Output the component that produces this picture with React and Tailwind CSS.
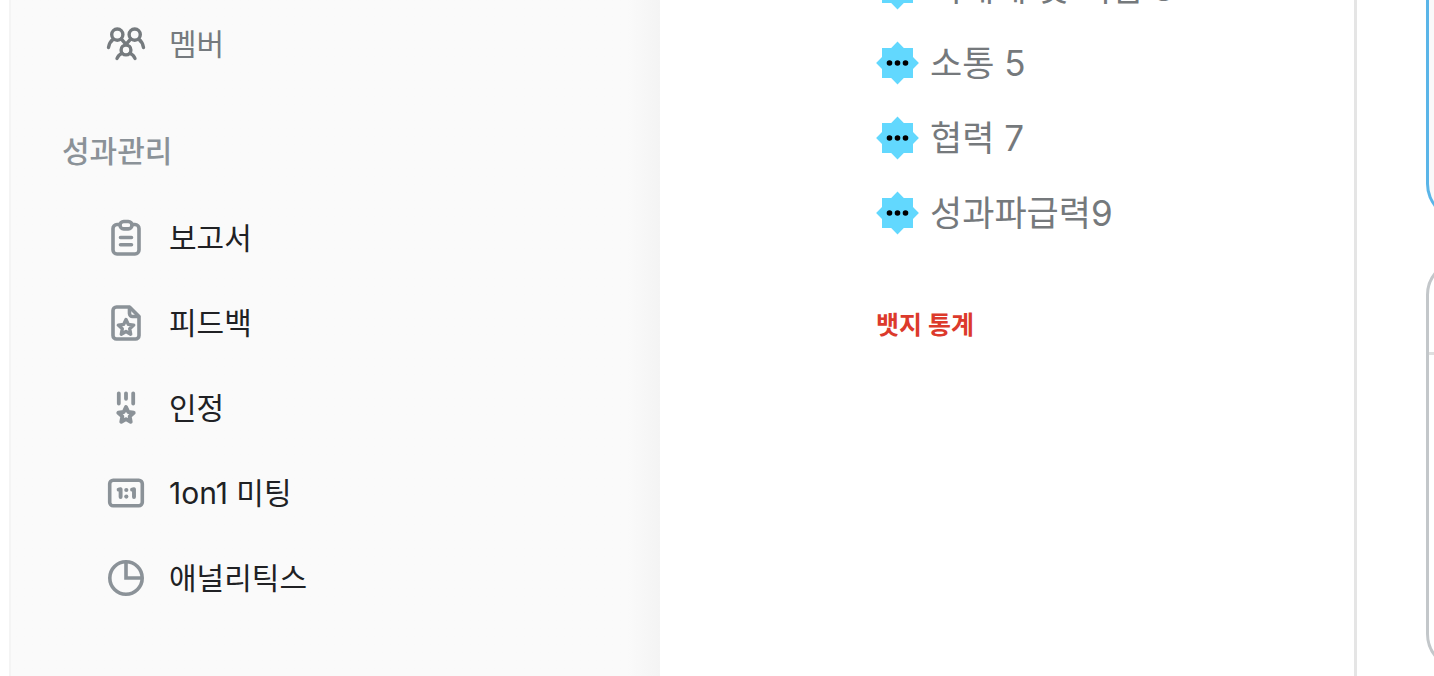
const members = [{ label: "멤버", icon: MembersIcon }];

const performance = [
  { label: "보고서", icon: ReportIcon },
  { label: "피드백", icon: FeedbackIcon },
  { label: "인정", icon: MedalIcon },
  { label: "1on1 미팅", icon: MeetingIcon },
  { label: "애널리틱스", icon: ChartIcon },
];

const badges = ["이해에 및 책임 8", "소통 5", "협력 7", "성과파급력9"];

const STAR = "M18 16.5l2.3 4.9 5.4.7-4 3.7 1 5.4-4.7-2.7-4.7 2.7 1-5.4-4-3.7 5.4-.7z";

function Icon({ children }) {
  return (
    <svg
      className="h-10 w-10 shrink-0"
      viewBox="-2 -2 40 40"
      fill="none"
      stroke="currentColor"
      strokeWidth="3.6"
      strokeLinecap="round"
      strokeLinejoin="round"
      aria-hidden="true"
    >
      {children}
    </svg>
  );
}

function MembersIcon() {
  return (
    <Icon>
      <g strokeWidth="3.4">
        <circle cx="9.3" cy="8.6" r="5.6" />
        <circle cx="26.7" cy="8.6" r="5.6" />
        <circle cx="18" cy="24" r="4.9" />
        <path d="M.5 21.5c.6-3.6 2.2-6.3 4.8-8.3M35.5 21.5c-.6-3.6-2.2-6.3-4.8-8.3M13.2 12.800l4.8 5.5 4.8-5.5M9 32.5c.8-2.1 2.4-4 5-5.2M27 32.5c-.8-2.1-2.4-4-5-5.2" />
      </g>
    </Icon>
  );
}

function ReportIcon() {
  return (
    <Icon>
      <path d="M12 4.5H9a4 4 0 0 0-4 4V30a4 4 0 0 0 4 4h18a4 4 0 0 0 4-4V8.5a4 4 0 0 0-4-4h-3" />
      <rect x="12" y="1.5" width="12" height="7.4" rx="3.7" />
      <path d="M12.5 17.5h11M12.5 24.7h11" />
    </Icon>
  );
}

function FeedbackIcon() {
  return (
    <Icon>
      <path d="M21.500 2H8.500A3.500 3.500 0 0 0 5 5.500v25A3.500 3.500 0 0 0 8.500 34h19a3.500 3.500 0 0 0 3.500-3.500V11.500z" />
      <path d="M21.500 2.500v6a3 3 0 0 0 3 3h6" />
      <path d={STAR} strokeWidth="3.4" transform="translate(0 -2)" />
    </Icon>
  );
}

function MedalIcon() {
  return (
    <Icon>
      <path d="M10.800 3.300v10.200M18 3.300v5.500M25.200 3.300v10.200" strokeWidth="3.800" />
      <path d={STAR} strokeWidth="3.900" transform="translate(0 .6)" />
    </Icon>
  );
}

function MeetingIcon() {
  return (
    <Icon>
      <rect x="1.7" y="5.3" width="32.6" height="25.4" rx="3.5" />
      <path d="M10.600 14.600l2-.4v7.800M24 14.600l2-.4v7.800" strokeWidth="3.900" />
      <g fill="currentColor" stroke="none">
        <circle cx="18.300" cy="15" r="2.100" />
        <circle cx="18.300" cy="21.600" r="2.100" />
      </g>
    </Icon>
  );
}

function ChartIcon() {
  return (
    <Icon>
      <circle cx="18" cy="18" r="16.2" />
      <path d="M18 2v16h16" strokeLinecap="butt" strokeLinejoin="miter" />
    </Icon>
  );
}

function BadgeIcon() {
  return (
    <svg className="h-11 w-11 shrink-0" viewBox="0 0 44 44" aria-hidden="true">
      <path
        fill="#62d8fe"
        d="M21.500.6l6.300 6.300H37v9.200l5.900 5.900-5.900 5.900v9.200h-9.200l-6.300 6.300-6.300-6.300H6v-9.200L.1 22 6 16.100V6.900h9.200z"
      />
      <circle cx="13.500" cy="22" r="2.800" />
      <circle cx="21.500" cy="22" r="2.800" />
      <circle cx="29.500" cy="22" r="2.800" />
    </svg>
  );
}

function NavList({ items, className }) {
  return (
    <ul className="flex flex-col gap-[37px]">
      {items.map(({ label, icon: ItemIcon }) => (
        <li key={label}>
          <a href="#" className="flex h-12 items-center gap-[23px]">
            <span className={className || "text-[#8b9298]"}>
              <ItemIcon />
            </span>
            <span className={className || "text-[#202124]"}>{label}</span>
          </a>
        </li>
      ))}
    </ul>
  );
}

export default function App() {
  return (
    <div className="flex h-screen overflow-hidden bg-white font-['Inter','Noto_Sans_CJK_KR',sans-serif]">
      {/* Sidebar */}
      <nav className="ml-[9px] flex w-[651px] shrink-0 flex-col border-l-2 border-[#f4f4f4] bg-[#fafafa] bg-linear-to-l from-[#f4f4f4] to-[#fafafa] to-5% pt-5 text-[30px] leading-[48px]">
        <div className="pl-[95px]">
          <NavList items={members} className="text-[#757a7e]" />
        </div>
        <h2 className="mt-[59px] pl-[51px] font-medium text-[#8b9298]">성과관리</h2>
        <div className="mt-[39px] pl-[95px]">
          <NavList items={performance} />
        </div>
      </nav>

      {/* Badge summary */}
      <section className="min-w-0 flex-1 border-r-3 border-[#e5e5e5] pl-[216px]">
        <ul className="-mt-10 flex flex-col gap-[19px] text-[35px] leading-14 text-[#75797c]">
          {badges.map((badge) => (
            <li key={badge} className="flex h-14 items-center gap-[10px] whitespace-nowrap">
              <BadgeIcon />
              {badge}
            </li>
          ))}
        </ul>
        <h2 className="mt-16 text-[25px] leading-10 font-bold text-[#dc3a2c]">뱃지 통계</h2>
      </section>

      {/* Cards continuing past the right edge */}
      <aside className="w-[77px] shrink-0 overflow-hidden pl-[69px]">
        <div className="h-[220px] w-80 rounded-b-[36px] border-3 border-t-0 border-[#5ab5e8] bg-[#f9f9f9]" />
        <div className="mt-[39px] h-[411px] w-80 rounded-[36px] border-3 border-[#c3c7ca]">
          <div className="h-[93px] border-b-3 border-[#dedfdf]" />
        </div>
      </aside>
    </div>
  );
}
